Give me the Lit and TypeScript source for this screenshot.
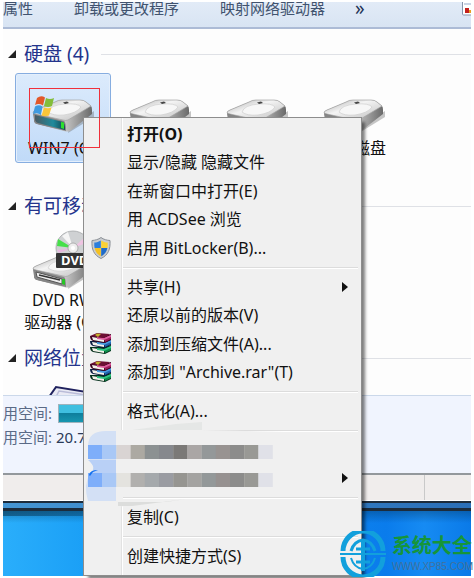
import { LitElement, html, svg, css, nothing } from "lit";
import { customElement, property } from "lit/decorators.js";

type IconName = "shield" | "rar" | "";
interface MenuEntry {
  label: string;
  icon?: IconName;
  strong?: boolean;
  submenu?: boolean;
  masked?: boolean;
}

const MENU: MenuEntry[][] = [
  [
    { label: "打开(O)", strong: true },
    { label: "显示/隐藏 隐藏文件" },
    { label: "在新窗口中打开(E)" },
    { label: "用 ACDSee 浏览" },
    { label: "启用 BitLocker(B)...", icon: "shield" },
  ],
  [
    { label: "共享(H)", submenu: true },
    { label: "还原以前的版本(V)" },
    { label: "添加到压缩文件(A)...", icon: "rar" },
    { label: '添加到 "Archive.rar"(T)', icon: "rar" },
  ],
  [{ label: "格式化(A)..." }],
  [
    { label: "菜单项 1", masked: true },
    { label: "菜单项 2", masked: true, submenu: true },
  ],
  [{ label: "复制(C)" }],
  [{ label: "创建快捷方式(S)" }],
];

const FONT = css`"Noto Sans", "Noto Sans CJK SC", sans-serif`;

const shieldIcon = html`<svg class="icon" viewBox="0 0 22 24" aria-hidden="true">
  <path d="M11 1.500C8.500 3.500 5 4.300 2 4.500C1.500 13 3.500 19 11 22.500C18.500 19 20.500 13 20 4.500C17 4.300 13.500 3.500 11 1.500Z" fill="#c9ccd0" stroke="#8b9096" stroke-width="1"/>
  <path d="M10.800 4.500C9 5.800 6.500 6.500 4.300 6.600C4.200 8.600 4.200 10.500 4.600 12H10.800Z" fill="#2d7fdc"/>
  <path d="M11.200 4.500C13 5.800 15.500 6.500 17.700 6.600C17.800 8.600 17.800 10.500 17.400 12H11.200Z" fill="#fbd235"/>
  <path d="M4.600 12C5.400 15.800 7.300 18.300 10.800 20.200V12Z" fill="#f5c122"/>
  <path d="M17.400 12C16.600 15.800 14.700 18.300 11.200 20.200V12Z" fill="#1f6cc9"/>
</svg>`;

const book = (y: number, fill: string, light: string, dark: string) => svg`
  <path d=${`M0 ${y}H14L21 ${y - 2}V${y + 4}L15 ${y + 7}L3 ${y + 5}Q0 ${y + 4} 0 ${y}Z`} fill=${dark}/>
  <path d=${`M2 ${y + 1}L14 ${y + 3}V${y + 6}L3 ${y + 4}Z`} fill="#f4f1ea"/>
  <path d=${`M14 ${y + 2}L21 ${y - 1}V${y + 3}L15 ${y + 6}Z`} fill=${fill}/>
  <path d=${`M7 ${y + 1}L14 ${y + 2}L21 ${y - 1}V${y + 1}L14 ${y + 4}L7 ${y + 3}Z`} fill=${light}/>`;

const rarIcon = html`<svg class="icon" viewBox="0 0 22 24" aria-hidden="true">
  ${book(15, "#0f8f4c", "#2fc483", "#05301c")}
  ${book(9, "#1f64ac", "#4a9be0", "#0a1d42")}
  ${book(4, "#a01c5c", "#dc5c9c", "#3d0520")}
  <path d="M0 4L7 1L20 2L14 6Z" fill="#6d0f34"/>
  <path d="M5 3L7 1.500L11 2L8 5Z" fill="#c4b02c"/>
</svg>`;

const arrow = html`<svg class="arrow" viewBox="0 0 6 10" aria-hidden="true"><path d="M0 0L6 5L0 10Z" fill="#111"/></svg>`;

const ROW_A = ["#7eaefa", "#a9c8f6", "#d9d4d3", "#aca9a2", "#8c9192", "#86888d", "#7b7977", "#aaa6a5", "#949899", "#989391", "#8c8c8b", "#999995", "#e0e1e8"];
const ROW_B = ["#7eaefa", "#a9c8f6", "#e4e3df", "#b1b0ae", "#a5a9ac", "#9a9ca2", "#969591", "#a4a3a1", "#939899", "#969190", "#8c8c8b", "#999995", "#e0e1e8"];

const mosaic = html`<svg class="mosaic" viewBox="0 0 240 84" aria-hidden="true">
  <path d="M46 8L90 2L116 0V8L200 10V72L130 78L90 80L60 86L30 84V8Z" fill="#f0f0f0"/>
  <path d="M46 8L90 2L116 0V8Z" fill="#e5e7e6"/>
  <path d="M32 80H80L100 77L46 84H32Z" fill="#dcdddc"/>
  <path d="M2 24Q2 9 20 9H30V79H2Q-3 62 4 52Q12 46 6 42Q2 38 2 24Z" fill="#d3e0f5"/>
  <path d="M2 38H30V52H3Q12 46 2 38Z" fill="#b9d0f6"/>
  ${ROW_A.map((c, i) => svg`<rect x=${2 + i * 14.2} y="23" width="14.400" height="14" fill=${c}/>`)}
  ${ROW_B.map((c, i) => svg`<rect x=${2 + i * 14.2} y="51" width="14.400" height="14" fill=${c}/>`)}
  <path d="M3 53Q4 48 12 48L7 50L4 54Z" fill="#1270f0"/>
</svg>`;

const driveBody = svg`
  <path d="M35 56L61 40V34L36 50Z" fill="#444" opacity=".3"/>
  <path d="M0 36Q0 34 3 33L22 25Q25 23 29 23H47Q51 23 53 25L58 29Q59 30 59 33V37L37 54Q34 55 31 54L4 47Q1 46 1 43Z" fill="url(#side)"/>
  <path d="M0 36Q0 34 3 33L22 25Q25 23 29 23H47Q51 23 53 25L58 29L35 43Q33 44 30 43L3 37Z" fill="url(#top)" stroke="#a4a4a4" stroke-width=".7"/>
  <path d="M15 35Q17 28 32 27Q45 26 48 30Q44 36 31 38Q20 39 15 35Z" fill="#f7f7f7" stroke="#cfcfcf" stroke-width=".7"/>
  <path d="M1 37L31 44Q33 45 33 54L4 47Q1 46 1 43Z" fill="#868686"/>
  <path d="M30 25.500L34 24.500L36 26L32 27Z" fill="#444"/>`;

const gradients = svg`<defs>
  <linearGradient id="top" x1="0" y1="0" x2="1" y2="1"><stop offset="0" stop-color="#a8a8a8"/><stop offset=".4" stop-color="#f4f4f4"/><stop offset="1" stop-color="#bcbcbc"/></linearGradient>
  <linearGradient id="side" x1="0" x2="1"><stop offset="0" stop-color="#777"/><stop offset=".55" stop-color="#c4c4c4"/><stop offset="1" stop-color="#6a6a6a"/></linearGradient>
  <linearGradient id="teal" x1="0" x2="1"><stop offset="0" stop-color="#4a5a62"/><stop offset=".6" stop-color="#1f8b9c"/><stop offset="1" stop-color="#124450"/></linearGradient>
</defs>`;

@customElement("drive-tile")
export class DriveTile extends LitElement {
  @property() label = "";
  @property() kind: "system" | "disk" | "dvd" | "network" = "disk";
  @property({ type: Boolean, reflect: true }) selected = false;

  static styles = css`
    :host {
      display: block;
      box-sizing: border-box;
      width: 96px;
      min-height: 90px;
      padding: 3px 0;
      border: 1px solid transparent;
      border-radius: 3px;
      text-align: center;
    }
    :host([selected]) {
      border-color: #86ade0;
      background: linear-gradient(#dcebfc, #c0daf8);
      box-shadow: inset 0 0 0 1px #e4effc;
    }
    .picture { display: block; width: 60px; height: 60px; margin: 0 auto; overflow: visible; }
    .label { margin: 0; font-size: 16px; line-height: 22px; white-space: pre-line; color: #111; }
    .badge { font: bold 13px "Noto Sans", sans-serif; fill: #fff; }
  `;

  private picture() {
    if (this.kind === "network") {
      return svg`<path d="M16 16L23 6L60 12V40H10Z" fill="#e9eaf4" stroke="#20225e" stroke-width="2"/><path d="M22 18L26 10L60 15" fill="none" stroke="#b9bbd8" stroke-width="1.500"/>`;
    }
    if (this.kind === "dvd") {
      return svg`
        <g transform="translate(0 4)">${driveBody}
          <path d="M3 39L29 46V51L4 44Z" fill="#eee" stroke="#555" stroke-width="1"/>
          <path d="M6 42L27 47" stroke="#333" stroke-width="1.500"/>
          <path d="M29 46L32 46V52L29 51Z" fill="#25c425"/>
        </g>
        <circle cx="40" cy="19" r="17" fill="#cfd1d3" stroke="#a5a7a9" stroke-width=".8"/>
        <path d="M40 19L25 10L24 17Z" fill="#46e04a"/>
        <path d="M40 19L29 7L35 3Z" fill="#f5f5f5"/>
        <path d="M40 19L52 8L56 13Z" fill="#efc4e2"/>
        <path d="M40 19L24 21L26 24Z" fill="#e6b9df"/>
        <circle cx="40" cy="19" r="5" fill="#eee" stroke="#999" stroke-width=".7"/>
        <circle cx="40" cy="19" r="2" fill="#fff"/>
        <rect x="23" y="24" width="38" height="15" rx="1" fill="#333"/>
        <text class="badge" x="28" y="36">DVD</text>`;
    }
    if (this.kind === "system") {
      return svg`${driveBody}
        <path d="M2 38L30 45Q32 46 32 53L5 46Q2 45 2 42Z" fill="url(#teal)"/>
        <path d="M28 45L31 45.500V52L28 51Z" fill="#2ee02e"/>
        <path d="M4 21Q8 18 12 20.500L10 28.500Q6 26 2 28Z" fill="#e2582a"/>
        <path d="M13 21Q17 23 21 21L19 29Q15 31 11 29Z" fill="#83bd3a"/>
        <path d="M2 29.500Q6 27 9.500 29.500L8 38Q4 35 0 37Z" fill="#3f9be0"/>
        <path d="M11 30.500Q15 32 18.500 30.500L16 38.500Q12 40 8.500 38.500Z" fill="#f8c63a"/>`;
    }
    return driveBody;
  }

  render() {
    return html`
      <svg class="picture" viewBox="0 0 60 60" aria-hidden="true">${gradients}${this.picture()}</svg>
      <p class="label">${this.label}</p>
    `;
  }
}

@customElement("context-menu")
export class ContextMenu extends LitElement {
  static styles = css`
    :host {
      display: block;
      box-sizing: border-box;
      width: 279px;
      padding: 1px 3px 5px;
      border: 1px solid #8d8d8d;
      background: linear-gradient(90deg, transparent 37px, #e2e2e2 37px, #e2e2e2 38px, #fff 38px, #fff 39px, transparent 39px) #f0f0f0;
      box-shadow: 4px 4px 3px -1px rgba(0, 0, 0, 0.5);
    }
    .group { position: relative; }
    .group + .group::before {
      content: "";
      display: block;
      height: 1px;
      margin: 5px 0 3px 36px;
      border-bottom: 1px solid #fff;
      background: #dcdcdc;
    }
    .item {
      display: grid;
      grid-template-columns: 28px 1fr 6px;
      column-gap: 12px;
      align-items: center;
      width: 100%;
      height: 29px;
      padding: 0 10px 0 0;
      border: 0;
      background: none;
      color: #111;
      font: 16px/22px ${FONT};
      text-align: left;
      white-space: nowrap;
    }
    .item:nth-child(even) { height: 28px; }
    .item:hover { background: rgba(120, 170, 230, 0.2); }
    .strong { font-weight: bold; }
    .icon { width: 22px; height: 24px; justify-self: center; }
    .arrow { width: 6px; height: 10px; }
    .mosaic { position: absolute; top: -8px; left: -1px; width: 240px; height: 84px; overflow: visible; pointer-events: none; }
  `;

  private item(e: MenuEntry) {
    const icon = e.icon === "shield" ? shieldIcon : e.icon === "rar" ? rarIcon : html`<span></span>`;
    return html`<button class="item ${e.strong ? "strong" : ""}" role="menuitem" aria-label=${e.label}>
      ${icon}<span>${e.masked ? nothing : e.label}</span>${e.submenu ? arrow : nothing}
    </button>`;
  }

  render() {
    return html`<div role="menu">
      ${MENU.map((g) => html`<div class="group" role="group">${g.map((e) => this.item(e))}${g[0].masked ? mosaic : nothing}</div>`)}
    </div>`;
  }
}

@customElement("app-root")
export class AppRoot extends LitElement {
  static styles = css`
    :host {
      display: flex;
      flex-direction: column;
      position: relative;
      box-sizing: border-box;
      height: 100vh;
      padding: 2px 3px;
      overflow: hidden;
      background: #fff;
      font: 15px/22px ${FONT};
      color: #111;
    }
    .toolbar {
      display: flex;
      align-items: flex-start;
      height: 25px;
      overflow: hidden;
      border-bottom: 2px solid #acbbd6;
      background: linear-gradient(#e2ebf7, #d8e4f3);
    }
    .tool {
      margin-right: 41px;
      padding: 0;
      border: 0;
      background: none;
      color: #41536f;
      font: 15px/12px ${FONT};
      white-space: nowrap;
    }
    .tool:nth-child(3) { margin-right: 30px; }
    .more { color: #1f3558; font-size: 19px; }
    .view { width: 9px; height: 14px; margin-left: auto; flex: none; }
    .view svg { display: block; }
    .files { flex: 1; min-height: 0; overflow: hidden; padding-top: 11px; background: #fdfdfd; }
    .heading {
      display: flex;
      align-items: center;
      margin: 0 0 5px;
      padding-left: 5px;
      font-size: 19px;
      font-weight: normal;
      line-height: 28px;
      color: #24348c;
      white-space: nowrap;
    }
    .heading svg { width: 8px; height: 8px; margin-right: 8px; }
    .heading::after { content: ""; flex: 1; height: 1px; margin-left: 12px; background: #dfe1e6; }
    .tiles { display: flex; gap: 1px; align-items: flex-start; min-height: 119px; padding-left: 12px; }
    .details {
      display: grid;
      grid-template-columns: 47px 120px;
      grid-auto-rows: 24px;
      column-gap: 6px;
      align-items: center;
      height: 72px;
      padding-top: 5px;
      border-top: 1px solid #cbd8ea;
      background: #f0f4fe;
      color: #5a6a86;
      white-space: nowrap;
    }
    .value { color: #2a3a58; }
    .used { height: 17px; margin-left: 2px; border: 1px solid #9fb3bd; background: linear-gradient(#3fbfe0 45%, #0e7f9c 50%, #1796b0); }
    .status {
      display: flex;
      height: 25px;
      border-top: 2px solid #93989c;
      border-bottom: 1px solid #fff;
      background: #f0edec;
    }
    .status span { margin-left: auto; width: 46px; border-left: 1px solid #c9c9c9; }
    .frame { height: 5px; border: solid #1c2c3c; border-width: 2px 0 3px; background: linear-gradient(90deg, #4596d4, #2a6fb8); }
    .desktop {
      height: 65px;
      background:
        linear-gradient(90deg, rgba(0, 30, 50, 0.45), transparent 50%) 0 0 / 100% 5px no-repeat,
        linear-gradient(rgba(0, 30, 50, 0.3), transparent 12px),
        linear-gradient(90deg, #2aaefb, #1a9ff6 18%, #0a7cec 82%, #168bf3 90%, #0a7ae8);
    }
    .menu { position: absolute; top: 117px; left: 83px; }
    .mark {
      position: absolute;
      top: 88px;
      left: 29px;
      width: 69px;
      height: 58px;
      border: 1px solid #f0303a;
      pointer-events: none;
    }
    .brand {
      position: absolute;
      right: 1px;
      bottom: 1px;
      display: flex;
      align-items: center;
      gap: 6px;
      color: #16953a;
      white-space: nowrap;
    }
    .brand svg { width: 46px; height: 46px; }
    .name { display: block; font-size: 20px; font-weight: bold; line-height: 26px; }
    .site { display: block; font: 10px/16px "Liberation Sans", sans-serif; color: #41719c; }
  `;

  private heading(text: string) {
    return html`<h2 class="heading"><svg viewBox="0 0 8 8" aria-hidden="true"><path d="M8 0V8H0Z" fill="#222"/></svg>${text}</h2>`;
  }

  render() {
    return html`
      <nav class="toolbar">
        <button class="tool">属性</button>
        <button class="tool">卸载或更改程序</button>
        <button class="tool">映射网络驱动器</button>
        <button class="tool more">»</button>
        <span class="view"><svg width="9" height="14" viewBox="0 0 9 14" aria-hidden="true">
          <rect x=".5" y="-2" width="12" height="15" rx="1" fill="#fff" stroke="#8795ab"/>
          <rect x="2" y="1" width="8" height="2" fill="#c9d4e4"/>
          <rect x="3" y="6" width="4" height="5" fill="#c4201c"/><rect x="7" y="8" width="2" height="3" fill="#e8a020"/>
        </svg></span>
      </nav>
      <main class="files">
        ${this.heading("硬盘 (4)")}
        <div class="tiles">
          <drive-tile kind="system" label="WIN7 (C:)" selected></drive-tile>
          <drive-tile label="本地磁盘"></drive-tile>
          <drive-tile label="本地磁盘"></drive-tile>
          <drive-tile label="本地磁盘"></drive-tile>
        </div>
        ${this.heading("有可移动存储的设备 (1)")}
        <div class="tiles"><drive-tile kind="dvd" label=${"DVD RW\n驱动器 (G:)"}></drive-tile></div>
        ${this.heading("网络位置 (1)")}
        <div class="tiles"><drive-tile kind="network"></drive-tile></div>
      </main>
      <section class="details">
        <span>用空间:</span><div class="used"></div>
        <span>用空间:</span><span class="value">20.7 GB</span>
      </section>
      <footer class="status"><span></span></footer>
      <div class="frame"></div>
      <div class="desktop"></div>
      <context-menu class="menu"></context-menu>
      <div class="mark"></div>
      <div class="brand">
        <svg viewBox="0 0 46 46" aria-hidden="true">
          <g fill="none" stroke="#12a0dc">
            <path d="M3 20A20 20 0 0 1 43 20" stroke-width="5"/>
            <path d="M3 26A20 20 0 0 0 43 26" stroke-width="5"/>
            <path d="M11 20Q14 10 23 9Q32 10 35 20" stroke-width="3"/>
            <path d="M0 23H46" stroke-width="2"/>
            <path d="M16 18H30M16 31H30" stroke-width="3"/>
            <path d="M11 27Q14 37 23 38Q32 37 35 27" stroke-width="2"/>
            <path d="M23 10V40" stroke-width="4"/>
          </g>
        </svg>
        <div><span class="name">系统大全</span><span class="site">WWW.XP85.COM</span></div>
      </div>
    `;
  }
}
